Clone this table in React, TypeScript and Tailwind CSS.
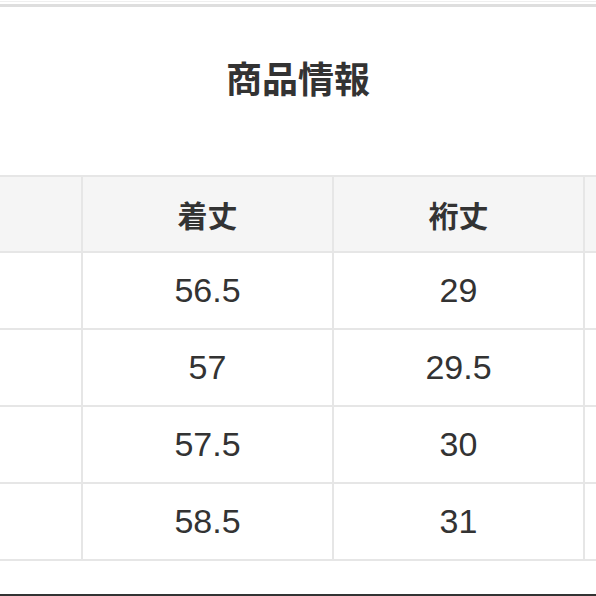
const rows = [
  ["56.5", "29"],
  ["57", "29.5"],
  ["57.5", "30"],
  ["58.5", "31"],
]

function Cell({ children, head }: { children?: React.ReactNode; head?: boolean }) {
  return (
    <div
      className={`w-[251px] shrink-0 border-l-2 border-[#e6e6e6] flex items-center justify-center ${
        head ? "bg-[#f5f5f5]" : "bg-white"
      }`}
    >
      {children}
    </div>
  )
}

export default function App() {
  return (
    <div className="w-[596px] h-[596px] bg-white overflow-hidden flex flex-col text-[#333]">
      <div className="h-px mt-px bg-[#efefef]" />
      <div className="h-[3px] mt-[2px] bg-[#dedede]" />

      <div className="h-[168px] flex justify-center">
        <h1
          className="mt-[45px] h-[50px] leading-[50px] text-[36px] font-bold"
          style={{ fontFamily: '"Noto Sans CJK JP", sans-serif' }}
        >
          商品情報
        </h1>
      </div>

      <div className="ml-[-170px] border-t-2 border-[#e6e6e6] flex flex-col">
        <div className="flex h-[76px] border-b-2 border-[#e6e6e6]">
          <Cell head />
          <Cell head>
            <span className="text-[30px] font-bold" style={{ fontFamily: '"Noto Sans CJK JP", sans-serif' }}>
              着丈
            </span>
          </Cell>
          <Cell head>
            <span className="text-[30px] font-bold" style={{ fontFamily: '"Noto Sans CJK JP", sans-serif' }}>
              裄丈
            </span>
          </Cell>
          <Cell head />
        </div>
        {rows.map((r) => (
          <div key={r[0]} className="flex h-[77px] border-b-2 border-[#e6e6e6]">
            <Cell />
            <Cell>
              <span className="text-[34px] font-['Liberation_Sans',Arial,sans-serif]">{r[0]}</span>
            </Cell>
            <Cell>
              <span className="text-[34px] font-['Liberation_Sans',Arial,sans-serif]">{r[1]}</span>
            </Cell>
            <Cell />
          </div>
        ))}
      </div>

      <div className="flex-1" />
      <div className="h-[2px] bg-[#333]" />
    </div>
  )
}
